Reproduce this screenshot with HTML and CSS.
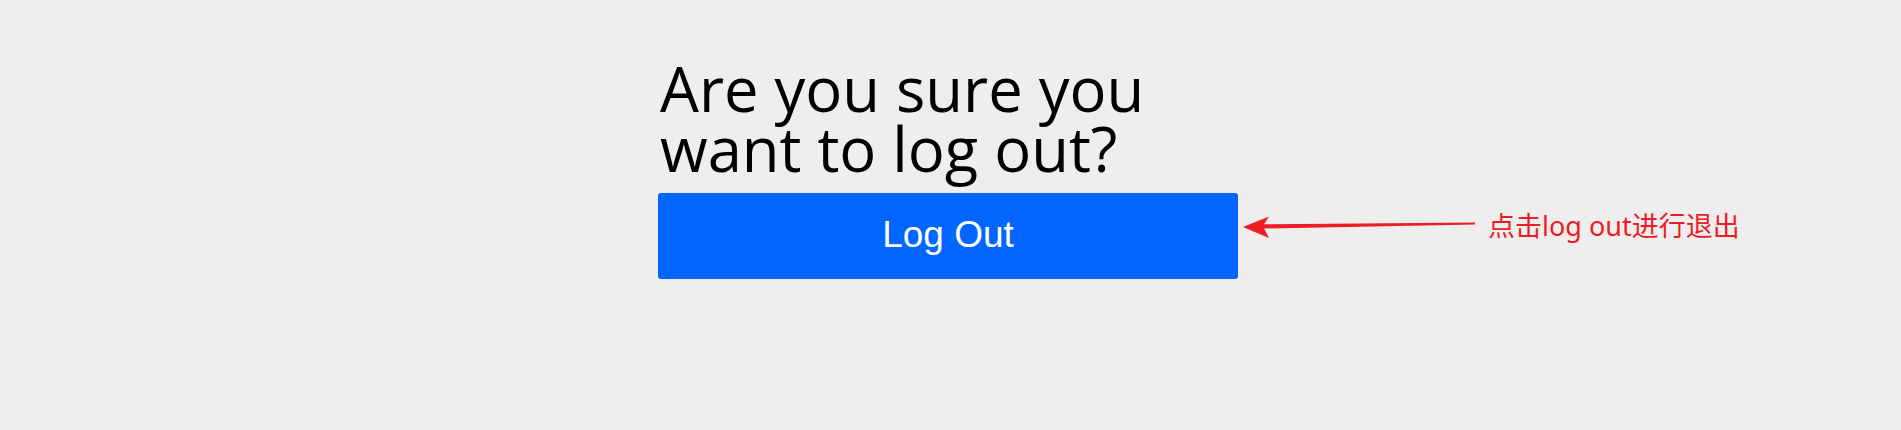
FILE: index.html
```html
<!DOCTYPE html>
<html lang="zh-CN">
<head>
<meta charset="utf-8">
<title>Log Out</title>
<link rel="stylesheet" href="styles.css">
</head>
<body>
<main class="page">
  <section class="logout">
    <h1 class="logout-title">Are you sure you want to log out?</h1>
    <div class="action-row">
      <button class="logout-btn" type="button">Log Out</button>
      <div class="note">
        <svg class="note-arrow" width="234" height="24" viewBox="0 0 234 24" aria-hidden="true">
          <polygon points="0,13 26,2.5 21,10.3 232,8.6 232,10.4 21,14.5 26,24" fill="#ee1c25"/>
        </svg>
        <span class="note-text">点击log out进行退出</span>
      </div>
    </div>
  </section>
</main>
</body>
</html>
```

FILE: styles.css
```css
html, body {
  margin: 0;
  padding: 0;
}
body {
  background: #eeeeee;
  height: 430px;
  overflow: hidden;
}
.page {
  padding-left: 658px;
  padding-top: 59px;
}
.logout {
  width: 580px;
}
.logout-title {
  margin: 0 0 15px 0;
  font-family: "Open Sans", "Noto Sans", sans-serif;
  font-weight: 400;
  font-size: 61.5px;
  line-height: 59.5px;
  color: #000;
  padding-left: 2px;
  width: 520px;
}
.action-row {
  position: relative;
}
.logout-btn {
  display: flex;
  align-items: center;
  justify-content: center;
  width: 580px;
  height: 86px;
  margin: 0;
  padding: 0 0 2px 0;
  border: none;
  border-radius: 3px;
  background: #0066ff;
  color: #ffffff;
  font-family: "Liberation Sans", Arial, sans-serif;
  font-size: 37px;
  letter-spacing: 0;
  cursor: pointer;
}
.note {
  position: absolute;
  left: 585px;
  top: 18px;
  display: flex;
  align-items: center;
  gap: 11px;
  white-space: nowrap;
}
.note-arrow {
  display: block;
}
.note-text {
  font-family: "Noto Sans", "Noto Sans CJK SC", sans-serif;
  font-size: 27px;
  color: #ee1c25;
  line-height: 30px;
}
```
